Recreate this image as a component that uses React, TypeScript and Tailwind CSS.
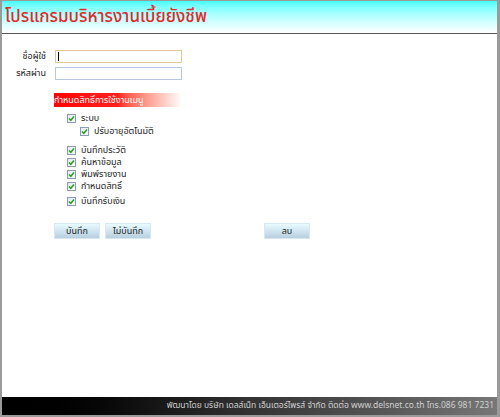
import React from "react";

const Check = ({ label, indent = false }: { label: string; indent?: boolean }) => (
  <div className={`flex items-center h-[12px] gap-[5px] ${indent ? "pl-[13px]" : ""}`}>
    <span className="w-[9px] h-[9px] border border-[#8a9cb4] bg-gradient-to-br from-[#dfe6ee] to-[#ffffff] flex items-center justify-center">
      <svg width="7" height="7" viewBox="0 0 7 7">
        <path d="M1 3.5 L2.8 5.3 L6 1.5" stroke="#22a022" strokeWidth="1.5" fill="none" />
      </svg>
    </span>
    <span className="text-[9px] leading-none text-[#222]">{label}</span>
  </div>
);

const Btn = ({ label }: { label: string }) => (
  <button className="block w-[46px] h-[16px] p-0 text-[9px] leading-none text-[#222] bg-gradient-to-b from-[#e8fbff] to-[#b8cfe0] border border-[#d8e8f0]">
    {label}
  </button>
);

export default function App() {
  return (
    <div
      className="w-[500px] h-[417px] flex flex-col bg-white border-l-2 border-r-[3px] border-t border-b-2 border-[#9a9a9a]"
      style={{ fontFamily: '"Noto Sans Thai", "Noto Sans", "DejaVu Sans", sans-serif' }}
    >
      <div className="h-[33px] bg-gradient-to-b from-[#44ffff] to-[#ffffff] border-b border-[#555] flex items-center pl-[3px]">
        <span className="text-[17px] font-medium leading-none text-[#e02a2a]">โปรแกรมบริหารงานเบี้ยยังชีพ</span>
      </div>
      <div className="flex-1 flex flex-col pt-[16px]">
        <div className="flex flex-col gap-[4px]">
          <div className="flex items-center gap-[9px]">
            <span className="w-[44px] text-right text-[9px] leading-none text-[#222]">ชื่อผู้ใช้</span>
            <div className="w-[127px] h-[13px] border border-[#e0c890] flex items-center pl-[2px]">
              <span className="w-px h-[9px] bg-black" />
            </div>
          </div>
          <div className="flex items-center gap-[9px]">
            <span className="w-[44px] text-right text-[9px] leading-none text-[#222]">รหัสผ่าน</span>
            <div className="w-[127px] h-[13px] border border-[#b4c8e0]" />
          </div>
        </div>
        <div className="ml-[52px] mt-[13px] w-[128px] h-[14px] bg-gradient-to-r from-[#ff0000] via-[#ff2020] to-[#ffffff] flex items-center">
          <span className="text-[9px] leading-none text-white">กำหนดสิทธิ์การใช้งานเมนู</span>
        </div>
        <div className="ml-[65px] mt-[5px] flex flex-col">
          <Check label="ระบบ" />
          <div className="mt-[1px]">
            <Check label="ปรับอายุอัตโนมัติ" indent />
          </div>
          <div className="mt-[7px] flex flex-col">
            <Check label="บันทึกประวัติ" />
            <Check label="ค้นหาข้อมูล" />
            <Check label="พิมพ์รายงาน" />
            <Check label="กำหนดสิทธิ์" />
          </div>
          <div className="mt-[3px]">
            <Check label="บันทึกรับเงิน" />
          </div>
        </div>
        <div className="ml-[52px] mt-[16px] flex items-start">
          <Btn label="บันทึก" />
          <div className="ml-[5px]">
            <Btn label="ไม่บันทึก" />
          </div>
          <div className="ml-[113px]">
            <Btn label="ลบ" />
          </div>
        </div>
      </div>
      <div className="h-[18px] bg-gradient-to-r from-[#000000] via-[#333333] to-[#777777] flex items-center justify-end pr-[3px]">
        <span className="text-[8.5px] leading-none text-[#d0d0d0]">
          พัฒนาโดย บริษัท เดลส์เน็ท เอ็นเตอร์ไพรส์ จำกัด ติดต่อ www.delsnet.co.th โทร.086 981 7231
        </span>
      </div>
    </div>
  );
}
